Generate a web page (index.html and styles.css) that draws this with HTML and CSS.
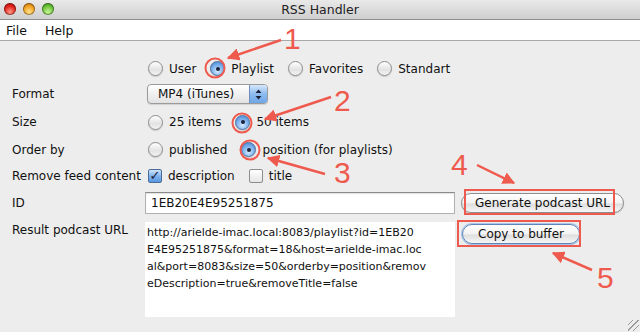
FILE: index.html
```html
<!doctype html>
<html>
    <head>
        <title>RSS Handler</title>
        <link rel="stylesheet" href="styles.css">
    </head>
    <body>
        <div class="window">
            <div class="titlebar">
                <div class="lights">
                    <span class="light red"></span>
                    <span class="light orange"></span>
                    <span class="light green"></span>
                </div>
                <div class="title">RSS Handler</div>
            </div>
            <div class="menubar">
                <span>File</span>
                <span>Help</span>
            </div>

            <div class="form">
                <div class="label"></div>
                <div class="controls">
                    <label class="option"><span class="radio"></span>User</label>
                    <label class="option"><span class="radio on"></span>Playlist</label>
                    <label class="option"><span class="radio"></span>Favorites</label>
                    <label class="option"><span class="radio"></span>Standart</label>
                </div>

                <div class="label">Format</div>
                <div class="controls">
                    <div class="select">
                        <span class="select-text">MP4 (iTunes)</span>
                        <span class="select-arrows">
                            <svg width="7" height="11" viewBox="0 0 7 11"><path d="M3.5 0.5 L6.5 4 L0.5 4 z M3.5 10.5 L6.5 7 L0.5 7 z" fill="#1b2238"/></svg>
                        </span>
                    </div>
                </div>

                <div class="label">Size</div>
                <div class="controls">
                    <label class="option"><span class="radio"></span>25 items</label>
                    <label class="option"><span class="radio on"></span>50 items</label>
                </div>

                <div class="label">Order by</div>
                <div class="controls">
                    <label class="option"><span class="radio"></span>published</label>
                    <label class="option"><span class="radio on"></span>position (for playlists)</label>
                </div>

                <div class="label">Remove feed content</div>
                <div class="controls">
                    <label class="option"><span class="check on">&#10003;</span>description</label>
                    <label class="option"><span class="check"></span>title</label>
                </div>

                <div class="label">ID</div>
                <div class="controls">
                    <div class="field">1EB20E4E95251875</div>
                    <button class="btn">Generate podcast URL</button>
                </div>

                <div class="label result-label">Result podcast URL</div>
                <div class="controls result">
                    <div class="textarea">http://arielde-imac.local:8083/playlist?id=1EB20<br>E4E95251875&amp;format=18&amp;host=arielde-imac.loc<br>al&amp;port=8083&amp;size=50&amp;orderby=position&amp;remov<br>eDescription=true&amp;removeTitle=false</div>
                    <button class="btn default">Copy to buffer</button>
                </div>
            </div>

            <div class="grip"></div>

            <svg class="notes" width="640" height="332" viewBox="0 0 640 332">
                <defs>
                    <marker id="head" viewBox="0 0 10 10" refX="9" refY="5" markerWidth="5" markerHeight="5" orient="auto">
                        <path d="M0 0 L10 5 L0 10 z" fill="#ef5a4e"/>
                    </marker>
                </defs>
                <g fill="none" stroke="#ef5a4e" stroke-width="2">
                    <circle cx="215" cy="68" r="9.5"/>
                    <circle cx="242" cy="123" r="9.5"/>
                    <circle cx="250" cy="150" r="9.5"/>
                    <rect x="465" y="190" width="149" height="24"/>
                    <rect x="458" y="221" width="122" height="25"/>
                </g>
                <g stroke="#ef5a4e" stroke-width="2.5" marker-end="url(#head)">
                    <line x1="281" y1="40" x2="228" y2="58"/>
                    <line x1="331" y1="97" x2="265" y2="119"/>
                    <line x1="325" y1="174" x2="268" y2="158"/>
                    <line x1="477" y1="165" x2="514" y2="183"/>
                    <line x1="592" y1="270" x2="553" y2="253"/>
                </g>
                <g class="num" fill="#ef5a4e">
                    <text x="284" y="49">1</text>
                    <text x="334" y="111">2</text>
                    <text x="334" y="183">3</text>
                    <text x="451" y="175">4</text>
                    <text x="597" y="288">5</text>
                </g>
            </svg>
        </div>
    </body>
</html>
```

FILE: styles.css
```css
body {
    margin: 0;
    font-family: 'DejaVu Sans', sans-serif;
    font-size: 12px;
    color: #111;
}
.window {
    position: relative;
    width: 640px;
    height: 332px;
    overflow: hidden;
    background: #ededed;
}
.titlebar {
    position: relative;
    height: 19px;
    background: linear-gradient(#e9e9e9, #cfcfcf);
    border-bottom: 1px solid #8e8e8e;
}
.lights {
    position: absolute;
    left: 4px;
    top: 3px;
    display: flex;
    gap: 7px;
}
.light {
    width: 12px;
    height: 12px;
    border-radius: 50%;
    box-shadow: inset 0 0 0 1px rgba(0,0,0,0.35);
}
.light.red {
    background: radial-gradient(circle at 50% 75%, #ff9a8a, #e0201a 55%, #9c0c08);
}
.light.orange {
    background: radial-gradient(circle at 50% 75%, #ffe28a, #f0a020 55%, #a26006);
}
.light.green {
    background: radial-gradient(circle at 50% 75%, #c8f59a, #6ac238 55%, #2f7a14);
}
.title {
    text-align: center;
    line-height: 19px;
    font-size: 12.5px;
    color: #222;
}
.menubar {
    height: 20px;
    background: #fff;
    border-bottom: 1px solid #a8a8a8;
    display: flex;
    gap: 18px;
    padding-left: 6px;
    align-items: center;
    font-size: 12.5px;
}
.form {
    display: grid;
    grid-template-columns: 133px 1fr;
    grid-template-rows: 23px 28px 28px 27px 26px 27px 1fr;
    padding: 16px 0 0 12px;
}
.label {
    display: flex;
    align-items: center;
}
.controls {
    display: flex;
    align-items: center;
    gap: 14px;
    padding-left: 3px;
}
.option {
    display: flex;
    align-items: center;
    gap: 6px;
}
.radio {
    width: 13px;
    height: 13px;
    border-radius: 50%;
    border: 1px solid #8c8c8c;
    background: linear-gradient(#ffffff, #e2e2e2 60%, #f4f4f4);
    box-shadow: 0 1px 1px rgba(0,0,0,0.15);
    position: relative;
}
.radio.on {
    border-color: #4a6c9a;
    background: radial-gradient(circle at 50% 70%, #d6ecff, #7fb3ee 50%, #3f7fd0);
}
.radio.on::after {
    content: '';
    position: absolute;
    left: 4.5px;
    top: 4.5px;
    width: 4px;
    height: 4px;
    border-radius: 50%;
    background: #1b2238;
}
.check {
    width: 12px;
    height: 12px;
    border: 1px solid #8c8c8c;
    border-radius: 2px;
    background: linear-gradient(#ffffff, #e6e6e6);
    font-size: 13px;
    line-height: 12px;
    text-align: center;
    font-weight: bold;
    color: #1b2238;
}
.check.on {
    border-color: #4a6c9a;
    background: linear-gradient(#cfe4fb, #7fb3ee 50%, #5a97e0);
}
.select {
    display: flex;
    width: 119px;
    height: 18px;
    margin-left: -1px;
    border: 1px solid #9a9a9a;
    border-radius: 4px;
    background: linear-gradient(#ffffff, #f0f0f0 50%, #e2e2e2);
    box-shadow: 0 1px 1px rgba(0,0,0,0.12);
    overflow: hidden;
}
.select-text {
    flex: 1;
    padding-left: 10px;
    line-height: 18px;
}
.select-arrows {
    width: 17px;
    display: flex;
    align-items: center;
    justify-content: center;
    border-left: 1px solid #6d8fbf;
    background: linear-gradient(#d7e8fb, #8dbbef 50%, #6ea6e8);
}
.field {
    width: 303px;
    height: 20px;
    margin-left: -3px;
    padding-left: 5px;
    line-height: 21px;
    background: #fff;
    border: 1px solid #b0b0b0;
    border-top-color: #8a8a8a;
    box-shadow: inset 0 1px 1px rgba(0,0,0,0.12);
}
.controls .field + .btn {
    margin-left: -8px;
}
.btn {
    font-family: inherit;
    font-size: 12px;
    color: #111;
    height: 20px;
    padding: 0 13px;
    border: 1px solid #8e8e8e;
    border-radius: 10px;
    background: linear-gradient(#ffffff, #f2f2f2 50%, #dedede 55%, #f6f6f6);
    box-shadow: 0 1px 1px rgba(0,0,0,0.15);
}
.btn.default {
    border-color: #5f85b8;
    box-shadow: 0 0 0 1px #a9c6ea, 0 1px 1px rgba(0,0,0,0.15);
}
.result-label {
    align-items: flex-start;
    padding-top: 7px;
}
.controls.result {
    align-items: flex-start;
    padding-top: 6px;
    gap: 7px;
}
.textarea {
    width: 308px;
    height: 91px;
    margin-left: -3px;
    padding: 2px 0 2px 2px;
    background: #fff;
    font-size: 11px;
    line-height: 17px;
    color: #111;
}
.controls.result .btn {
    margin-top: 2px;
    width: 118px;
    padding: 0;
}
.grip {
    position: absolute;
    right: 1px;
    bottom: 1px;
    width: 11px;
    height: 11px;
    background: repeating-linear-gradient(135deg, transparent 0 3px, #9a9a9a 3px 4px);
}
.notes {
    position: absolute;
    left: 0;
    top: 0;
    pointer-events: none;
}
.num text {
    font-family: 'Liberation Sans', sans-serif;
    font-size: 30px;
}
```
